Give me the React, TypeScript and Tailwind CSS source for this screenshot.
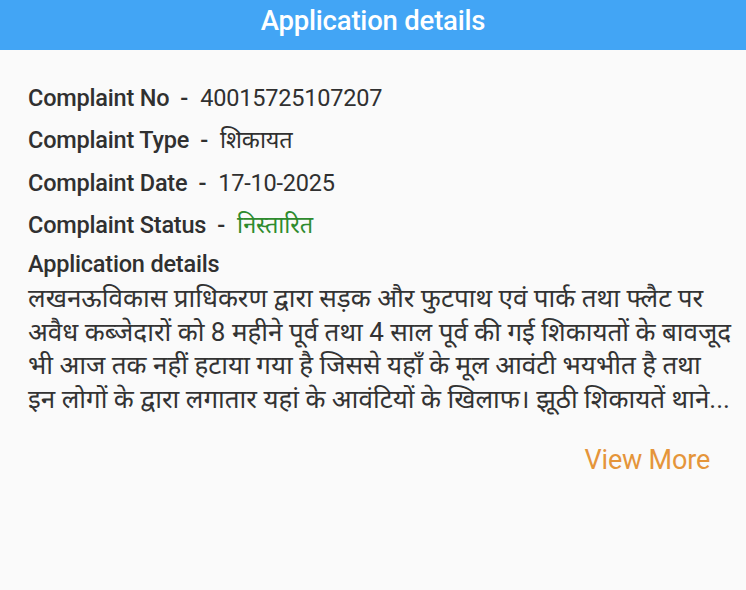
import React from 'react';

const rows: { label: string; value: string; color?: string }[] = [
  { label: 'Complaint No', value: '40015725107207' },
  { label: 'Complaint Type', value: 'शिकायत' },
  { label: 'Complaint Date', value: '17-10-2025' },
  { label: 'Complaint Status', value: 'निस्तारित', color: 'text-[#2e8b2e]' },
];

// Lines as they wrap on the device; the last one is cut with an ellipsis
const detailLines = [
  'लखनऊविकास प्राधिकरण द्वारा सड़क और फुटपाथ एवं पार्क तथा फ्लैट पर',
  'अवैध कब्जेदारों को 8 महीने पूर्व तथा 4 साल पूर्व की गई शिकायतों के बावजूद',
  'भी आज तक नहीं हटाया गया है जिससे यहाँ के मूल आवंटी भयभीत है तथा',
  'इन लोगों के द्वारा लगातार यहां के आवंटियों के खिलाफ। झूठी शिकायतें थाने...',
];

export default function App() {
  return (
    <div className="w-[746px] h-[590px] bg-[#fafafa] font-['Roboto','Noto_Sans',sans-serif] overflow-hidden">
      {/* Header */}
      <div className="h-[50px] bg-[#42a5f5] flex items-center justify-center pb-[9px]">
        <h1 className="text-white text-[27.5px] font-medium tracking-[-0.2px]">Application details</h1>
      </div>

      <div className="px-[28px] pt-[27px]">
        {rows.map((r) => (
          <div key={r.label} className="flex items-center h-[42.5px] text-[23.5px] text-[#303030] tracking-[-0.2px]">
            <span className="font-medium">{r.label}</span>
            <span className="font-medium ml-[11px] mr-[12px]">-</span>
            <span className={r.color ?? ''}>{r.value}</span>
          </div>
        ))}

        <div className="mt-[3px] text-[23.5px] font-medium text-[#303030] leading-[28px] tracking-[-0.2px]">Application details</div>
        <div className="text-[26px] text-[#333] leading-[33.5px] mt-[4px]">
          {detailLines.map((l, i) => (
            <div key={i} className="whitespace-nowrap">{l}</div>
          ))}
        </div>

        <div className="flex justify-end pr-[8px] mt-[24px]">
          <button className="text-[27px] text-[#e5953a] tracking-[-0.2px]">View More</button>
        </div>
      </div>
    </div>
  );
}
